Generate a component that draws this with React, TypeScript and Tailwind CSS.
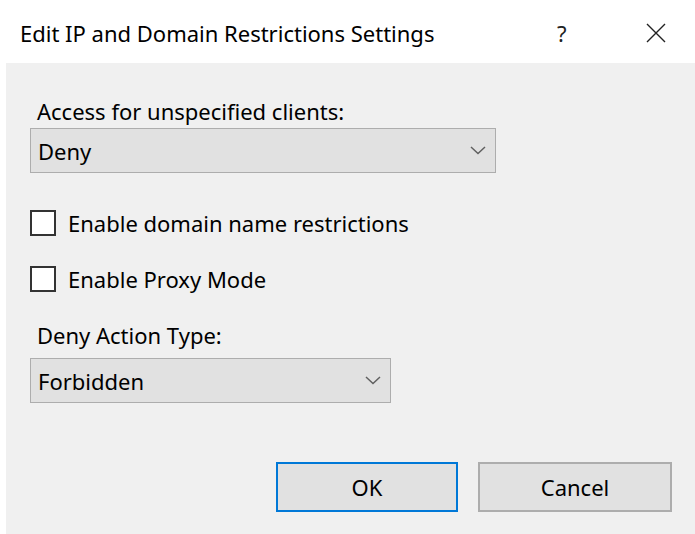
const font = "font-['Segoe_UI','Noto_Sans','Open_Sans',sans-serif]"

function Chevron() {
  return (
    <svg width="16" height="9" viewBox="0 0 16 9" className="shrink-0">
      <path d="M1 1 L8 7.5 L15 1" fill="none" stroke="#606060" strokeWidth="1.5" />
    </svg>
  )
}

function Select({ value, width }: { value: string; width: string }) {
  return (
    <div
      className={`${width} flex h-[45px] items-center justify-between border border-[#adadad] bg-[#e1e1e1] pl-[7px] pr-[9px]`}
    >
      <span>{value}</span>
      <Chevron />
    </div>
  )
}

function Check({ label }: { label: string }) {
  return (
    <label className="flex items-center gap-[12px]">
      <span className="h-[26px] w-[26px] shrink-0 border-2 border-[#333333] bg-white" />
      <span>{label}</span>
    </label>
  )
}

export default function App() {
  return (
    <div className={`${font} flex h-[534px] w-[695px] flex-col bg-white text-[22px] leading-[28px] text-black`}>
      {/* title bar */}
      <div className="flex h-[63px] shrink-0 items-center pl-[20px] pt-[2px]">
        <span className="flex-1">Edit IP and Domain Restrictions Settings</span>
        <span className="w-[20px] text-[#222]">?</span>
        <div className="ml-[68px] mr-[28px]">
          <svg width="22" height="22" viewBox="0 0 22 22">
            <path d="M2 2 L20 20 M20 2 L2 20" stroke="#222" strokeWidth="1.4" />
          </svg>
        </div>
      </div>

      <div className="ml-[6px] flex flex-1 flex-col bg-[#f0f0f0] pl-[24px] pt-[34px]">
        <div className="pl-[7px]">Access for unspecified clients:</div>
        <div className="mt-[3px]">
          <Select value="Deny" width="w-[466px]" />
        </div>

        <div className="mt-[36px] flex flex-col gap-[28px]">
          <Check label="Enable domain name restrictions" />
          <Check label="Enable Proxy Mode" />
        </div>

        <div className="mt-[28px] pl-[7px]">Deny Action Type:</div>
        <div className="mt-[9px]">
          <Select value="Forbidden" width="w-[361px]" />
        </div>

        <div className="mt-[59px] flex gap-[20px] pl-[246px]">
          <button
            type="button"
            className="h-[50px] w-[182px] border-2 border-[#0078d7] bg-[#e1e1e1]"
          >
            OK
          </button>
          <button
            type="button"
            className="h-[50px] w-[194px] border-2 border-[#adadad] bg-[#e1e1e1]"
          >
            Cancel
          </button>
        </div>
      </div>
    </div>
  )
}
